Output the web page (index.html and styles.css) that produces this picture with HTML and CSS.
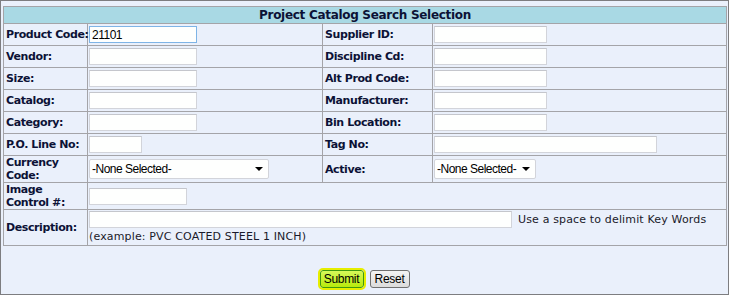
FILE: index.html
```html
<!DOCTYPE html>
<html lang="en">
<head>
  <meta charset="UTF-8" />
  <title>Project Catalog Search Selection</title>
  <link rel="stylesheet" href="styles.css">
</head>
<body>

  <div class="page">
    <table class="search">
      <colgroup>
        <col class="c-label">
        <col class="c-field">
        <col class="c-label2">
        <col class="c-field2">
      </colgroup>
      <thead>
        <tr>
          <th colspan="4">Project Catalog Search Selection</th>
        </tr>
      </thead>
      <tbody>
        <tr>
          <td class="lbl">Product Code:</td>
          <td class="fld"><input type="text" class="w-md focus" value="21101"></td>
          <td class="lbl">Supplier ID:</td>
          <td class="fld"><input type="text" class="w-md2"></td>
        </tr>
        <tr>
          <td class="lbl">Vendor:</td>
          <td class="fld"><input type="text" class="w-md"></td>
          <td class="lbl">Discipline Cd:</td>
          <td class="fld"><input type="text" class="w-md2"></td>
        </tr>
        <tr>
          <td class="lbl">Size:</td>
          <td class="fld"><input type="text" class="w-md"></td>
          <td class="lbl">Alt Prod Code:</td>
          <td class="fld"><input type="text" class="w-md2"></td>
        </tr>
        <tr>
          <td class="lbl">Catalog:</td>
          <td class="fld"><input type="text" class="w-md"></td>
          <td class="lbl">Manufacturer:</td>
          <td class="fld"><input type="text" class="w-md2"></td>
        </tr>
        <tr>
          <td class="lbl">Category:</td>
          <td class="fld"><input type="text" class="w-md"></td>
          <td class="lbl">Bin Location:</td>
          <td class="fld"><input type="text" class="w-md2"></td>
        </tr>
        <tr>
          <td class="lbl">P.O. Line No:</td>
          <td class="fld"><input type="text" class="w-sm"></td>
          <td class="lbl">Tag No:</td>
          <td class="fld"><input type="text" class="w-lg"></td>
        </tr>
        <tr>
          <td class="lbl two">Currency<br>Code:</td>
          <td class="fld">
            <span class="sel w-sel">
              <select><option>-None Selected-</option></select>
            </span>
          </td>
          <td class="lbl">Active:</td>
          <td class="fld">
            <span class="sel w-sel2">
              <select><option>-None Selected-</option></select>
            </span>
          </td>
        </tr>
        <tr>
          <td class="lbl two">Image<br>Control #:</td>
          <td class="fld" colspan="3"><input type="text" class="w-img"></td>
        </tr>
        <tr>
          <td class="lbl">Description:</td>
          <td class="fld desc" colspan="3">
            <div class="desc-line">
              <input type="text" class="w-desc">
              <span class="hint">Use a space to delimit Key Words</span>
            </div>
            <div class="hint example">(example: PVC COATED STEEL 1 INCH)</div>
          </td>
        </tr>
      </tbody>
    </table>

    <div class="actions">
      <button type="submit" class="btn btn-submit">Submit</button>
      <button type="reset" class="btn btn-reset">Reset</button>
    </div>
  </div>

</body>
</html>
```

FILE: styles.css
```css
html, body {
  margin: 0;
  padding: 0;
}

body {
  font-family: 'DejaVu Sans', Verdana, sans-serif;
  background: #eaf0fb;
  color: #0c1236;
}

.page {
  box-sizing: border-box;
  width: 729px;
  height: 295px;
  border: 1px solid #7d7d80;
  padding: 5px 2px 0 2px;
  background: #eaf0fb;
}

table.search {
  width: 723px;
  table-layout: fixed;
  border-collapse: collapse;
  border: 1px solid #a4a4a8;
}

.c-label { width: 84px; }
.c-field { width: 235px; }
.c-label2 { width: 110px; }
.c-field2 { width: 294px; }

thead th {
  background: #a9d9e4;
  height: 16px;
  padding: 0;
  font-size: 12px;
  font-weight: bold;
  letter-spacing: -0.3px;
  line-height: 15px;
  color: #0c1236;
  text-align: center;
  border: 1px solid #a4a4a8;
}

td {
  border: 1px solid #a4a4a8;
  padding: 2px 1px;
  vertical-align: middle;
}

.lbl {
  font-size: 11px;
  font-weight: bold;
  letter-spacing: -0.4px;
  line-height: 13px;
  padding-left: 2px;
  white-space: nowrap;
}

.lbl.two {
  line-height: 13px;
  padding-top: 0;
  padding-bottom: 0;
}

input[type=text] {
  box-sizing: border-box;
  display: block;
  height: 17px;
  margin: 0;
  padding: 0 2px;
  border: 1px solid #d2d4da;
  border-top-color: #c4c6cc;
  background: #fefffe;
  font-family: 'Liberation Sans', Arial, sans-serif;
  font-size: 12px;
  letter-spacing: -0.5px;
  color: #000;
}

input.focus {
  border-color: #7eb4e6;
}

.w-md { width: 108px; }
.w-md2 { width: 113px; }
.w-sm { width: 53px; }
.w-lg { width: 223px; }
.w-img { width: 98px; }
.w-desc { width: 423px; }

.sel {
  position: relative;
  display: block;
}

.sel select {
  box-sizing: border-box;
  appearance: none;
  -webkit-appearance: none;
  display: block;
  width: 100%;
  height: 20px;
  margin: 0;
  padding: 0 2px;
  border: 1px solid #d2d4da;
  border-radius: 2px;
  background: #fefffe;
  font-family: 'Liberation Sans', Arial, sans-serif;
  font-size: 12px;
  letter-spacing: -0.5px;
  color: #000;
}

.sel::after {
  content: "";
  position: absolute;
  right: 6px;
  top: 8px;
  border-left: 4px solid transparent;
  border-right: 4px solid transparent;
  border-top: 4px solid #000;
}

.w-sel { width: 180px; }
.w-sel2 { width: 102px; }

.desc {
  padding-top: 1px;
  padding-bottom: 2px;
}

.desc-line {
  display: flex;
  align-items: center;
  gap: 6px;
}

.hint {
  font-size: 11px;
  line-height: 13px;
  letter-spacing: 0.15px;
  color: #1a1a2a;
  white-space: nowrap;
}

.example {
  padding-top: 2px;
}

.actions {
  display: flex;
  justify-content: center;
  gap: 6px;
  margin-top: 24px;
}

.btn {
  box-sizing: border-box;
  height: 18px;
  margin: 0;
  padding: 0 3px;
  font-family: 'Liberation Sans', Arial, sans-serif;
  font-size: 12px;
  letter-spacing: -0.3px;
  line-height: 14px;
  color: #000;
  cursor: pointer;
}

.btn-submit {
  width: 44px;
  border: 1px solid #3f9a10;
  border-radius: 3px;
  background: linear-gradient(#d6f95a, #b8ea0c);
  outline: 2px solid #e6ee00;
}

.btn-reset {
  width: 40px;
  border: 1px solid #707070;
  border-radius: 3px;
  background: linear-gradient(#f4f4f4, #dcdcdc);
}
```
